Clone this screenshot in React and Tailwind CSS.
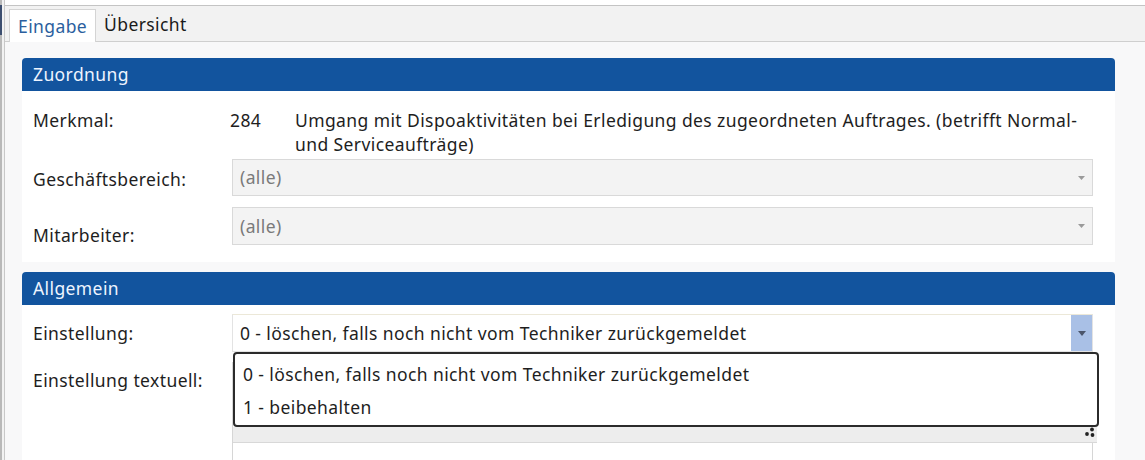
export default function App() {
  const font = { fontFamily: '"Noto Sans", "Open Sans", sans-serif' };
  return (
    <div className="w-[1145px] h-[460px] overflow-hidden bg-white flex text-[17.5px] tracking-[0.4px] text-[#1e1e1e]" style={font}>
      {/* left edge */}
      <div className="w-[5px] h-full flex">
        <div className="w-[2px] h-full bg-[#b9b9b9] flex flex-col">
          <div className="h-[5px]" />
          <div className="h-[30px] bg-[#3d4f70]" />
        </div>
        <div className="w-[2px] h-full bg-[#f2f2f2]" />
        <div className="w-[1px] h-full bg-[#c8c8c8]" />
      </div>
      <div className="flex-1 flex flex-col min-w-0">
        <div className="h-[5px] bg-white" />
        {/* tab bar */}
        <div className="h-[37px] bg-[#f2f2f2] border-t border-[#c4c4c4] border-b border-b-[#cfcfcf] flex items-end pl-[4px] shrink-0">
          <div className="h-[33px] px-[8px] bg-white border border-b-0 border-[#d4d4d4] flex items-center text-[#2b5f9e] -mb-px">
            Eingabe
          </div>
          <div className="h-[33px] px-[8px] flex items-center text-[#1a1a1a]">Übersicht</div>
        </div>
        {/* content */}
        <div className="flex-1 bg-[#f8f8f9] pl-[17px] pr-[30px] pt-[16px] flex flex-col">
          {/* Zuordnung */}
          <div className="flex flex-col shrink-0">
            <div className="h-[33px] rounded-t-[4px] bg-[#12549e] text-[#eef4ff] flex items-center pl-[11px]">Zuordnung</div>
            <div className="bg-white pl-[11px] pr-[22px] pt-[17px] pb-[17px] flex flex-col">
              <div className="flex leading-[24px]">
                <div className="w-[197px] shrink-0">Merkmal:</div>
                <div className="w-[65px] shrink-0">284</div>
                <div className="flex-1">
                  <div className="whitespace-nowrap">Umgang mit Dispoaktivitäten bei Erledigung des zugeordneten Auftrages. (betrifft Normal-</div>
                  <div className="whitespace-nowrap">und Serviceaufträge)</div>
                </div>
              </div>
              <div className="flex mt-[3px] h-[37px]">
                <div className="w-[199px] shrink-0 flex items-center translate-y-[2px]">Geschäftsbereich:</div>
                <DisabledSelect />
              </div>
              <div className="flex mt-[11px] h-[38px]">
                <div className="w-[199px] shrink-0 flex items-center translate-y-[9px]">Mitarbeiter:</div>
                <DisabledSelect />
              </div>
            </div>
          </div>
          {/* Allgemein */}
          <div className="flex flex-col mt-[10px] flex-1">
            <div className="h-[33px] rounded-t-[4px] bg-[#12549e] text-[#eef4ff] flex items-center pl-[11px] shrink-0">Allgemein</div>
            <div className="bg-white pl-[11px] pr-[22px] pt-[9px] flex flex-col flex-1">
              <div className="flex h-[38px]">
                <div className="w-[199px] shrink-0 flex items-center">Einstellung:</div>
                <div className="flex-1 h-[38px] bg-white border border-[#e3e3e3] border-t-[#ece8d8] flex items-center">
                  <div className="flex-1 pl-[7px] whitespace-nowrap">0 - löschen, falls noch nicht vom Techniker zurückgemeldet</div>
                  <div className="w-[21px] h-full bg-[#a9c0e6] flex items-center justify-center">
                    <svg width="8" height="5" viewBox="0 0 8 5"><path d="M0 0 H8 L4 5 Z" fill="#4b556b" /></svg>
                  </div>
                </div>
              </div>
              <div className="flex relative flex-1">
                <div className="w-[199px] shrink-0 pt-[15px]">Einstellung textuell:</div>
                <div className="flex-1 mt-[10px] border-x border-t border-[#d6d6d6] bg-white" />
                {/* dropdown popup */}
                <div className="absolute left-[200px] right-[-6px] top-0 flex flex-col">
                  <div className="h-[75px] border-2 border-[#2b2b2b] rounded-[4px] bg-white flex flex-col pl-[8px] pt-[4px]">
                    <div className="h-[33px] flex items-center whitespace-nowrap">0 - löschen, falls noch nicht vom Techniker zurückgemeldet</div>
                    <div className="h-[33px] flex items-center whitespace-nowrap">1 - beibehalten</div>
                  </div>
                  <div className="h-[16px] mr-[2px] bg-[#ededed] border-b border-[#d8d8d8] flex justify-end items-start pr-[2px]">
                    <svg width="12" height="12" viewBox="0 0 12 12">
                      <circle cx="9" cy="2.5" r="1.9" fill="#222" />
                      <circle cx="4" cy="7" r="1.9" fill="#222" />
                      <circle cx="9.5" cy="8" r="1.9" fill="#222" />
                    </svg>
                  </div>
                </div>
              </div>
            </div>
          </div>
        </div>
      </div>
    </div>
  );
}

function DisabledSelect() {
  return (
    <div className="flex-1 h-full bg-[#f3f3f3] border border-[#d9d9d9] flex items-center">
      <div className="flex-1 pl-[7px] text-[#7a7a7a]">(alle)</div>
      <div className="w-[21px] flex items-center justify-center">
        <svg width="7" height="4" viewBox="0 0 7 4"><path d="M0 0 H7 L3.5 4 Z" fill="#9a9a9a" /></svg>
      </div>
    </div>
  );
}
